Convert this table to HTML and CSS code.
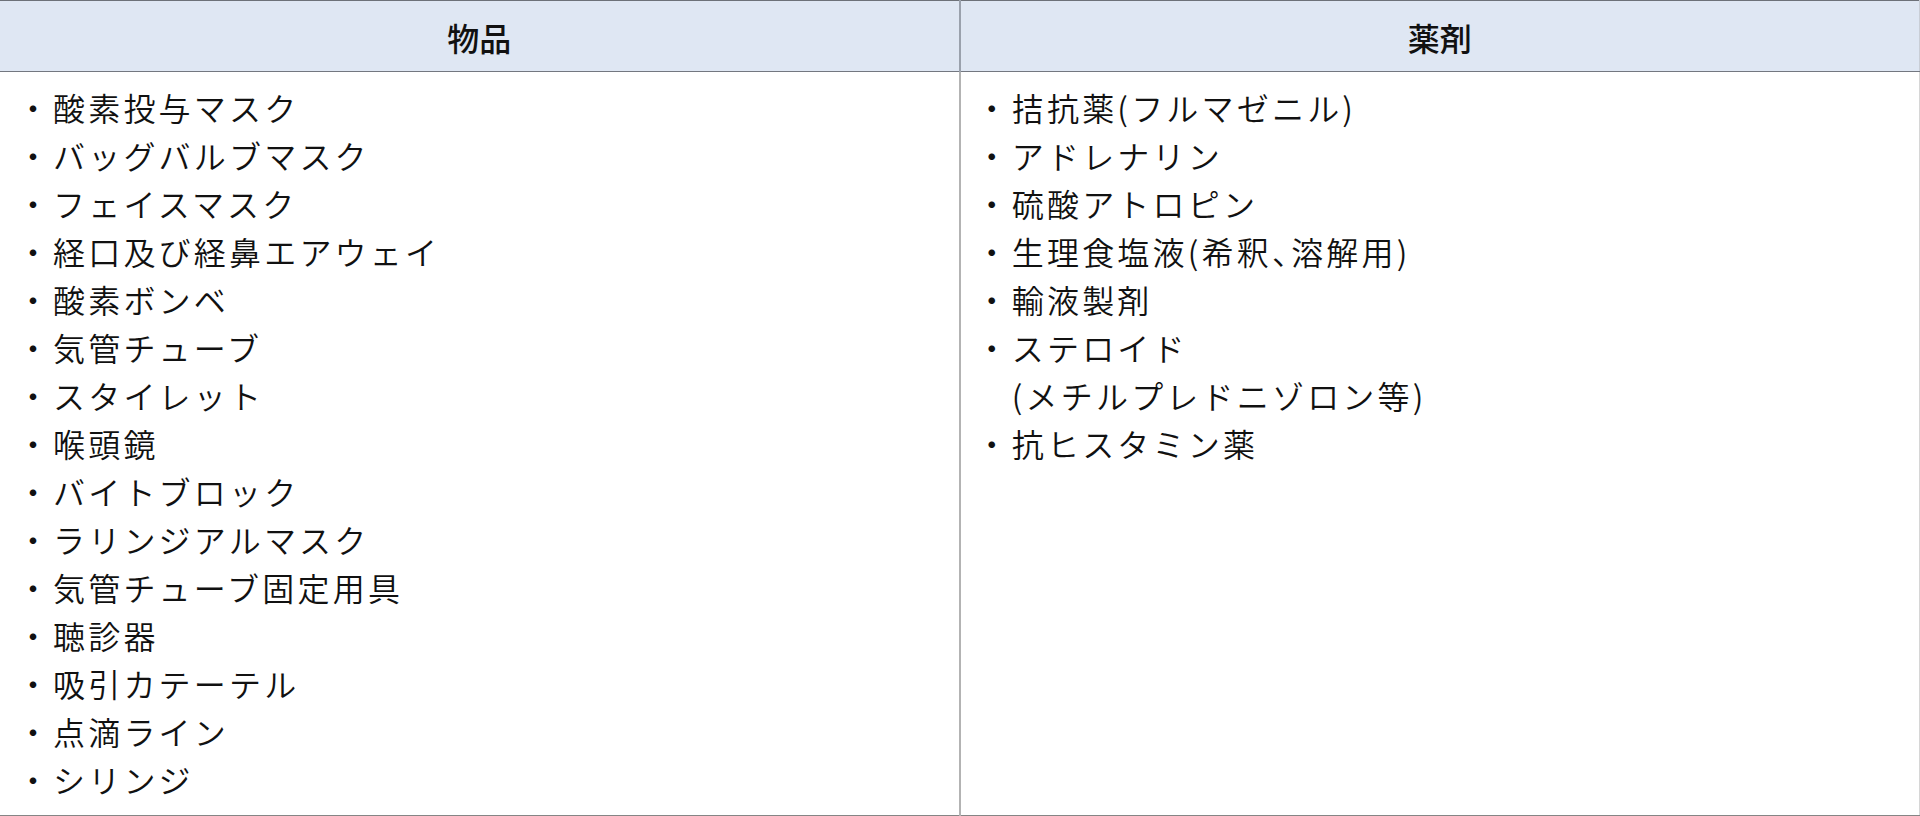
FILE: index.html
```html
<!DOCTYPE html>
<html lang="ja">
<head>
<meta charset="utf-8">
<title>物品・薬剤</title>
<link rel="stylesheet" href="styles.css">
</head>
<body>
<table class="supply-table">
  <thead>
    <tr>
      <th class="head-cell">物品</th>
      <th class="head-cell head-cell--right">薬剤</th>
    </tr>
  </thead>
  <tbody>
    <tr>
      <td class="body-cell">
        <ul class="item-list">
          <li>酸素投与マスク</li>
          <li>バッグバルブマスク</li>
          <li>フェイスマスク</li>
          <li>経口及び経鼻エアウェイ</li>
          <li>酸素ボンベ</li>
          <li>気管チューブ</li>
          <li>スタイレット</li>
          <li>喉頭鏡</li>
          <li>バイトブロック</li>
          <li>ラリンジアルマスク</li>
          <li>気管チューブ固定用具</li>
          <li>聴診器</li>
          <li>吸引カテーテル</li>
          <li>点滴ライン</li>
          <li>シリンジ</li>
        </ul>
      </td>
      <td class="body-cell body-cell--right">
        <ul class="item-list">
          <li>拮抗薬(フルマゼニル)</li>
          <li>アドレナリン</li>
          <li>硫酸アトロピン</li>
          <li>生理食塩液(希釈<span class="punct">、</span>溶解用)</li>
          <li>輸液製剤</li>
          <li>ステロイド<br>(メチルプレドニゾロン等)</li>
          <li>抗ヒスタミン薬</li>
        </ul>
      </td>
    </tr>
  </tbody>
</table>
</body>
</html>
```
FILE: styles.css
```css
html, body {
  margin: 0;
  padding: 0;
  background: #ffffff;
}

body {
  font-family: "Noto Sans CJK JP", "Noto Sans", sans-serif;
  color: #111111;
}

.supply-table {
  width: 1920px;
  height: 816px;
  border-collapse: collapse;
  table-layout: fixed;
}

.head-cell {
  height: 71px;
  padding: 2px 0 0;
  background: #dfe7f3;
  border-top: 1px solid #6d7178;
  border-bottom: 1px solid #737780;
  font-size: 32px;
  font-weight: 500;
  line-height: 1;
  text-align: center;
  vertical-align: middle;
  box-sizing: border-box;
}

.head-cell--right {
  border-left: 2px solid #9aa1ac;
  border-right: 1px solid #c9ced6;
}

.body-cell {
  padding: 11px 0 11px 17px;
  vertical-align: top;
  border-bottom: 1px solid #858585;
}

.body-cell--right {
  border-left: 2px solid #b3b3b3;
  border-right: 1px solid #d6d6d6;
  padding-left: 15px;
}

.item-list {
  list-style: none;
  margin: 0;
  padding: 0;
  font-size: 32px;
  font-weight: 350;
  line-height: 48px;
  letter-spacing: 0.1em;
}

.item-list li {
  padding-left: 36px;
  text-indent: -36px;
}

.item-list li::before {
  content: "・";
  display: inline-block;
  width: 36px;
  text-indent: 0;
  letter-spacing: 0;
}

.punct {
  font-feature-settings: "halt";
}
```
